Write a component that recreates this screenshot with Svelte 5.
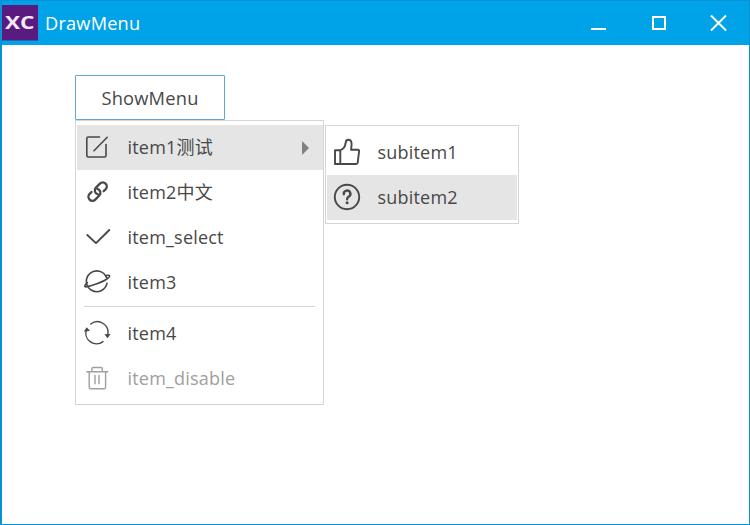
<script>
  const items = [
    { icon: 'edit', label: 'item1测试', active: true, arrow: true },
    { icon: 'link', label: 'item2中文' },
    { icon: 'check', label: 'item_select' },
    { icon: 'planet', label: 'item3' },
    { separator: true },
    { icon: 'refresh', label: 'item4' },
    { icon: 'trash', label: 'item_disable', disabled: true }
  ];
  const subitems = [
    { icon: 'thumb', label: 'subitem1' },
    { icon: 'help', label: 'subitem2', active: true }
  ];
</script>

{#snippet icon(name)}
  <svg class="icon" viewBox="0 0 28 29" width="28" height="29">
    {#if name === 'edit'}
      <path d="M16.5 4H5.2Q3.8 4 3.8 5.4V22.6Q3.8 24 5.2 24H21.6Q23 24 23 22.6V11.5M11 17.8L24.2 4.3" />
    {:else if name === 'link'}
      <g transform="translate(14.6 13.6) rotate(-45)" stroke-width="2.3">
        <path d="M-4.6 -4H-7.3A4 4 0 0 0 -7.3 4H-1.6A4 4 0 0 0 1.7 -2.2" />
        <path d="M4.6 4H7.3A4 4 0 0 0 7.3 -4H1.6A4 4 0 0 0 -1.7 2.2" />
      </g>
    {:else if name === 'check'}
      <path d="M4.3 12L13 20.1L26.3 7" stroke-width="1.9" />
    {:else if name === 'planet'}
      <path d="M24 15.2A10.4 10.4 0 1 1 23.5 9.6" />
      <path d="M4.2 14.6C1.8 16.8 1 18.7 2.6 18.9C8 18.2 20 14 24.6 10.5C27.6 8.2 27.6 6.7 22.6 7.6" />
    {:else if name === 'refresh'}
      <path d="M7.8 5A10.6 10.6 0 0 1 24.6 16M20 22.6A10.6 10.6 0 0 1 3.4 11" stroke-width="1.4" />
      <path d="M.8 12.4L3.8 8.2L7 12ZM21.4 15.3L27.4 15L24.6 19.2Z" class="solid" />
    {:else if name === 'trash'}
      <path d="M3.8 7.7H24.8M8.9 7.5V4.8Q8.9 3.5 10.2 3.5H18Q19.3 3.5 19.3 4.8V7.5M6.2 8V23.3Q6.2 24.7 7.6 24.7H21.2Q22.6 24.7 22.6 23.3V8M12 11.5V19.7M16 11.5V19.7" stroke-width="1.4" />
    {:else if name === 'thumb'}
      <path d="M2 12.2H7.1C10.4 11.4 12.2 9 12.6 5.2C12.7 2.8 13.4 1.7 15.2 1.7C17.6 1.7 18.6 3.3 18.6 6L18.1 11.8H24.9Q26.3 11.8 26.1 13.2L24.7 24.7Q24.5 26 23.2 26H2ZM7.3 12.2V26" stroke-width="1.9" />
    {:else if name === 'help'}
      <circle cx="14" cy="14" r="12.2" stroke-width="1.9" />
      <path d="M10.8 11.2A3.3 3.3 0 1 1 15.6 13.8Q14.1 14.6 14.1 16.2" stroke-width="2.4" />
      <circle cx="14.1" cy="19.8" r="1.5" class="solid" />
    {/if}
  </svg>
{/snippet}

{#snippet row(item)}
  {#if item.separator}
    <div class="separator"></div>
  {:else}
    <div class="row" class:active={item.active} class:disabled={item.disabled}>
      {@render icon(item.icon)}
      <span class="label">{item.label}</span>
      {#if item.arrow}<span class="arrow"></span>{/if}
    </div>
  {/if}
{/snippet}

<div class="window">
  <header>
    <svg class="logo" width="36" height="36" viewBox="0 0 36 36">
      <rect width="36" height="35.5" fill="#5a1b80" />
      <text x="3" y="24" textLength="29.5" lengthAdjust="spacingAndGlyphs">XC</text>
    </svg>
    <h1>DrawMenu</h1>
    <svg class="controls" width="140" height="24" viewBox="0 0 140 24">
      <path d="M1 18H16M63 6H75V18H63Z" />
      <path d="M121 4.5L136 19.5M136 4.5L121 19.5" />
    </svg>
  </header>
  <main>
    <button>ShowMenu</button>
    <div class="menus">
      <div class="menu">
        {#each items as item}{@render row(item)}{/each}
      </div>
      <div class="menu sub">
        {#each subitems as item}{@render row(item)}{/each}
      </div>
    </div>
  </main>
</div>

<style>
  .window {
    box-sizing: border-box;
    width: 750px;
    height: 525px;
    border: solid #0792d5;
    border-width: 1px 1px 1px 2px;
    background: #fff;
    color: #484848;
    font: 18px/24px 'Open Sans', 'Noto Sans CJK SC', sans-serif;
    letter-spacing: 0.2px;
    overflow: hidden;
  }
  header {
    display: flex;
    align-items: center;
    height: 44px;
    background: #00a2e8;
  }
  .logo text {
    font: bold 18px 'Open Sans', sans-serif;
    letter-spacing: 0;
    fill: #f4eaf6;
  }
  h1 {
    margin: 0 auto 0 7px;
    color: #fff;
    font: inherit;
    font-size: 18.2px;
  }
  .controls {
    margin-right: 19px;
    margin-top: -1px;
    fill: none;
    stroke: #fff;
    stroke-width: 2;
  }
  main { padding: 30px 0 0 73px; }
  button {
    display: block;
    width: 150px;
    height: 45px;
    padding: 0;
    border: 1px solid #5ba7d8;
    border-radius: 1px;
    background: #fff;
    color: inherit;
    font: inherit;
    font-size: 18.3px;
    letter-spacing: inherit;
  }
  .menus {
    display: flex;
    align-items: flex-start;
    gap: 1px;
  }
  .menu {
    box-sizing: border-box;
    width: 249px;
    height: 285px;
    padding: 4px 0 0 1px;
    border: 1px solid #d5d5d5;
    background: #fff;
  }
  .sub {
    width: 194px;
    height: 99px;
    margin-top: 5px;
    padding-right: 1px;
  }
  .row {
    display: flex;
    align-items: center;
    height: 45px;
    padding-left: 6px;
  }
  .active { background: #e5e5e5; }
  .disabled { color: #a0a0a0; }
  .icon {
    flex: none;
    fill: none;
    stroke: currentColor;
    stroke-width: 1.6;
    stroke-linecap: round;
    stroke-linejoin: round;
  }
  .icon .solid {
    fill: currentColor;
    stroke: none;
  }
  .label {
    margin: 0 0 2px 16.5px;
    white-space: nowrap;
  }
  .arrow {
    margin: 0 14px 0 auto;
    border: solid transparent;
    border-width: 7px 0 7px 7px;
    border-left-color: #808080;
  }
  .separator {
    height: 6px;
    margin: 0 8px 0 7px;
    background: linear-gradient(#d5d5d5, #d5d5d5) 0 1px / 100% 1px no-repeat;
  }
</style>
